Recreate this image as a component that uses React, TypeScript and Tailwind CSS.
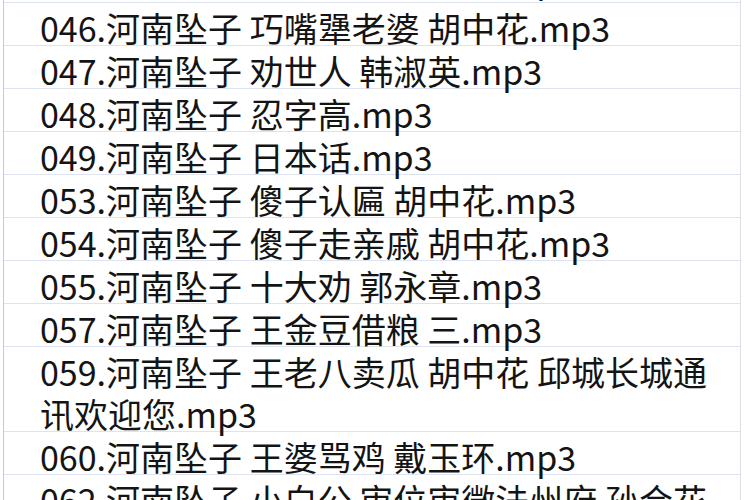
const rows = [
  '045.河南坠子 王婆骂鸡 胡中花.mp3',
  '046.河南坠子 巧嘴犟老婆 胡中花.mp3',
  '047.河南坠子 劝世人 韩淑英.mp3',
  '048.河南坠子 忍字高.mp3',
  '049.河南坠子 日本话.mp3',
  '053.河南坠子 傻子认匾 胡中花.mp3',
  '054.河南坠子 傻子走亲戚 胡中花.mp3',
  '055.河南坠子 十大劝 郭永章.mp3',
  '057.河南坠子 王金豆借粮 三.mp3',
  '059.河南坠子 王老八卖瓜 胡中花 邱城长城通讯欢迎您.mp3',
  '060.河南坠子 王婆骂鸡 戴玉环.mp3',
  '062.河南坠子 小白公 审位审微法州府 孙合花.mp3',
]

export default function App() {
  return (
    <div className="h-[500px] w-[750px] overflow-hidden bg-white">
      <div className="ml-[3px] mr-[9px] -mt-[40.5px] border-l border-r border-l-[#c9c9c9] border-r-[#dcdfe6]">
        {rows.map((r, i) => (
          <div
            key={r}
            className="border-b-[1.5px] border-[#dde3f0] pl-[36px] pr-[18px] text-[34px] leading-[42px] text-[#141414] whitespace-normal break-all"
            style={{ fontFamily: '"Noto Sans CJK SC", "Noto Sans", sans-serif' }}
          >
            <span className={i === 0 ? 'relative -top-[2px]' : 'relative top-[4px]'}>{r}</span>
          </div>
        ))}
      </div>
    </div>
  )
}
